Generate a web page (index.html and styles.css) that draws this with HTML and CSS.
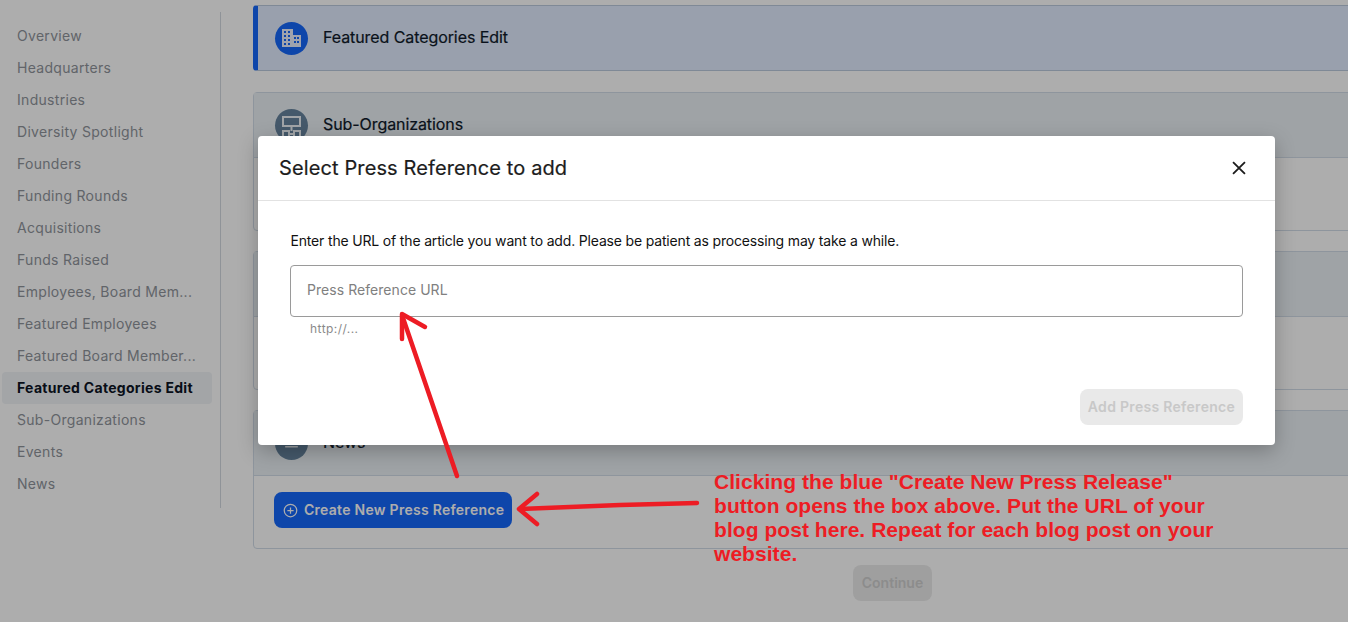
FILE: index.html
```html
<!DOCTYPE html>
<html lang="en">
<head>
<meta charset="utf-8">
<title>Press Reference</title>
<link rel="stylesheet" href="styles.css">
</head>
<body>
<div class="page">
  <nav class="sidebar">
    <a class="nav-item">Overview</a>
    <a class="nav-item">Headquarters</a>
    <a class="nav-item">Industries</a>
    <a class="nav-item">Diversity Spotlight</a>
    <a class="nav-item">Founders</a>
    <a class="nav-item">Funding Rounds</a>
    <a class="nav-item">Acquisitions</a>
    <a class="nav-item">Funds Raised</a>
    <a class="nav-item">Employees, Board Mem...</a>
    <a class="nav-item">Featured Employees</a>
    <a class="nav-item">Featured Board Member...</a>
    <a class="nav-item active">Featured Categories Edit</a>
    <a class="nav-item">Sub-Organizations</a>
    <a class="nav-item">Events</a>
    <a class="nav-item">News</a>
  </nav>
  <main class="main">
    <section class="card card-active">
      <header class="card-head">
        <span class="circle circle-blue">
          <svg viewBox="0 0 21 19" class="circle-icon"><path fill="currentColor" fill-rule="evenodd" d="M1 0h11v6h8v12H1V0zm2 2v2h2V2H3zm4 0v2h2V2H7zM3 6v2h2V6H3zm4 0v2h2V6H7zm-4 4v2h2v-2H3zm4 0v2h2v-2H7zm-4 4v2h2v-2H3zm4 0v2h2v-2H7zm6-6v2h2V8h-2zm3 0v2h2V8h-2zm-3 4v2h2v-2h-2zm3 0v2h2v-2h-2z"/></svg>
        </span>
        <h2 class="card-title">Featured Categories Edit</h2>
      </header>
    </section>
    <section class="card">
      <header class="card-head card-head-line">
        <span class="circle">
          <svg viewBox="0 0 21 24" class="circle-icon circle-icon-tall"><path fill="none" stroke="currentColor" stroke-width="2" d="M2 1h17v9H2zM10.500 10v5M8 18h5M2 15h6v6H2zM13 15h6v6h-6z"/></svg>
        </span>
        <h2 class="card-title">Sub-Organizations</h2>
      </header>
      <div class="card-body card-body-empty"></div>
    </section>
    <section class="card">
      <header class="card-head card-head-line">
        <span class="circle"></span>
        <h2 class="card-title">Events</h2>
      </header>
      <div class="card-body card-body-empty"></div>
    </section>
    <section class="card">
      <header class="card-head card-head-line">
        <span class="circle">
          <svg viewBox="0 0 24 24" class="circle-icon"><path fill="currentColor" d="M4 5h16v2H4zM4 10h16v2H4zM4 15h16v2H4z"/></svg>
        </span>
        <h2 class="card-title">News</h2>
      </header>
      <div class="card-body">
        <button class="btn-primary">
          <svg viewBox="0 0 24 24" class="btn-icon"><circle cx="12" cy="12" r="10" fill="none" stroke="currentColor" stroke-width="2"/><path d="M12 7v10M7 12h10" stroke="currentColor" stroke-width="2"/></svg>
          Create New Press Reference
        </button>
      </div>
    </section>
    <div class="actions"><button class="btn-continue">Continue</button></div>
  </main>
</div>
<div class="overlay"></div>
<div class="modal">
  <header class="modal-head">
    <h1 class="modal-title">Select Press Reference to add</h1>
    <svg viewBox="0 0 24 24" class="close"><path d="M5.500 5.500l13 13M18.500 5.500l-13 13" stroke="currentColor" stroke-width="2" fill="none"/></svg>
  </header>
  <div class="modal-body">
    <p class="modal-text">Enter the URL of the article you want to add. Please be patient as processing may take a while.</p>
    <input class="modal-input" type="text" placeholder="Press Reference URL">
    <p class="helper">http://...</p>
    <div class="modal-actions"><button class="btn-add">Add Press Reference</button></div>
  </div>
</div>
<svg class="arrows" viewBox="0 0 1348 622">
  <g fill="none" stroke="#ed1c24" stroke-width="4.500" stroke-linecap="round" stroke-linejoin="round">
    <path d="M457 476L403 318"/>
    <path d="M402 339L402 314L425 327"/>
    <path d="M697 503L620 505L520 509"/>
    <path d="M537 494L519 509L537 524"/>
  </g>
</svg>
<p class="note">Clicking the blue "Create New Press Release" button opens the box above. Put the URL of your blog post here. Repeat for each blog post on your website.</p>
</body>
</html>
```
FILE: styles.css
```css
* { box-sizing: border-box; }
html, body { margin: 0; height: 622px; overflow: hidden; background: #fff; }
body { font-family: "Inter", "Liberation Sans", sans-serif; color: #111827; position: relative; width: 1348px; }
h1, h2, p { margin: 0; }
button { font-family: inherit; border: 0; }

.page { display: flex; align-items: flex-start; width: 1348px; height: 622px; overflow: hidden; }

.sidebar { width: 221px; flex: none; margin-top: 12px; padding: 8px 8px 8px 2px; border-right: 1px solid #d3d9e0; display: flex; flex-direction: column; }
.nav-item { height: 32px; line-height: 31px; padding: 0 0 0 15px; font-size: 14px; letter-spacing: 0.3px; color: #8f949b; border-radius: 4px; white-space: nowrap; }
.nav-item.active { background: #f0f3f7; color: #0c1424; font-weight: 700; letter-spacing: 0.3px; }

.main { margin-left: 32px; flex: none; width: 1279px; padding-top: 5px; display: flex; flex-direction: column; }
.card { background: #fff; border: 1px solid #d2dce8; border-radius: 4px; margin-bottom: 20px; }
.card-active { border-left: 5px solid #1668fb; margin-bottom: 21px; border-color: #bccade; border-left-color: #1668fb; }
.card-head { height: 64px; display: flex; align-items: center; gap: 15px; padding-left: 21px; background: #eaf0f5; }
.card-active .card-head { background: #e2ecff; padding-left: 17px; }
.card-head-line { border-bottom: 1px solid #d2dce8; height: 65px; }
.circle { width: 33px; height: 33px; border-radius: 50%; flex: none; background: #66849e; color: #eef2f6; display: flex; align-items: center; justify-content: center; }
.circle-blue { background: #1668fb; color: #eaf0ff; }
.circle-icon { width: 21px; height: 19px; }
.circle-icon-tall { height: 24px; margin-top: 6px; }
.card-title { font-size: 16px; line-height: 22px; margin-top: -2px; font-weight: 400; letter-spacing: -0.08px; color: #0f1a2a; -webkit-text-stroke: 0.2px #0f1a2a; }
.card-body { height: 72px; padding: 16px 20px; }
.card-body-empty { height: 72px; }

.btn-primary { height: 36px; width: 238px; background: #1668fb; color: #fff; border-radius: 8px; font-size: 14px; font-weight: 600; letter-spacing: 0.27px; display: flex; align-items: center; gap: 6px; padding: 0 0 2px 9px; white-space: nowrap; }
.btn-icon { width: 15px; height: 15px; margin-top: 2px; }
.actions { display: flex; justify-content: center; margin-top: -4px; }
.btn-continue { width: 79px; height: 36px; border-radius: 8px; background: #ebebeb; color: #cfcfcf; font-size: 14px; font-weight: 600; padding: 0 0 1px; }

.overlay { position: absolute; inset: 0; background: rgba(0, 0, 0, 0.32); }

.modal { position: absolute; left: 258px; top: 136px; width: 1017px; height: 309px; background: #fff; border-radius: 4px; box-shadow: 0 6px 20px rgba(0, 0, 0, 0.25); }
.modal-head { height: 65px; border-bottom: 1px solid #e2e2e2; display: flex; align-items: center; justify-content: space-between; padding: 0 25px 0 21px; }
.modal-title { font-size: 20px; font-weight: 400; letter-spacing: 0.12px; color: #1c1c1c; -webkit-text-stroke: 0.2px #1c1c1c; }
.close { width: 22px; height: 22px; color: #1c1c1c; }
.modal-body { padding: 31px 32px 20px; display: flex; flex-direction: column; }
.modal-text { font-size: 14px; line-height: 17px; height: 17px; letter-spacing: -0.17px; color: #111; margin-left: 0.5px; }
.modal-input { margin-top: 16px; height: 52px; width: 953px; border: 1px solid #9a9a9a; border-radius: 4px; padding: 0 16px 3px; font-family: inherit; font-size: 14px; letter-spacing: 0.05px; }
.modal-input::placeholder { color: #808080; opacity: 1; }
.helper { font-size: 12px; line-height: 16px; margin-top: 4px; padding-left: 20px; letter-spacing: 0.45px; color: #8a8a8a; }
.modal-actions { display: flex; justify-content: flex-end; margin-top: 52px; }
.btn-add { width: 163px; height: 36px; border-radius: 8px; background: #e9e9e9; color: #c8c8c8; font-size: 14px; font-weight: 600; letter-spacing: 0.3px; white-space: nowrap; padding: 0 0 2px; }

.arrows { position: absolute; left: 0; top: 0; width: 1348px; height: 622px; }
.note { position: absolute; left: 714px; top: 470px; width: 510px; font-family: "Liberation Sans", Arial, sans-serif; font-weight: 700; font-size: 21px; letter-spacing: 0.05px; line-height: 24px; color: #ed1c24; }
```
